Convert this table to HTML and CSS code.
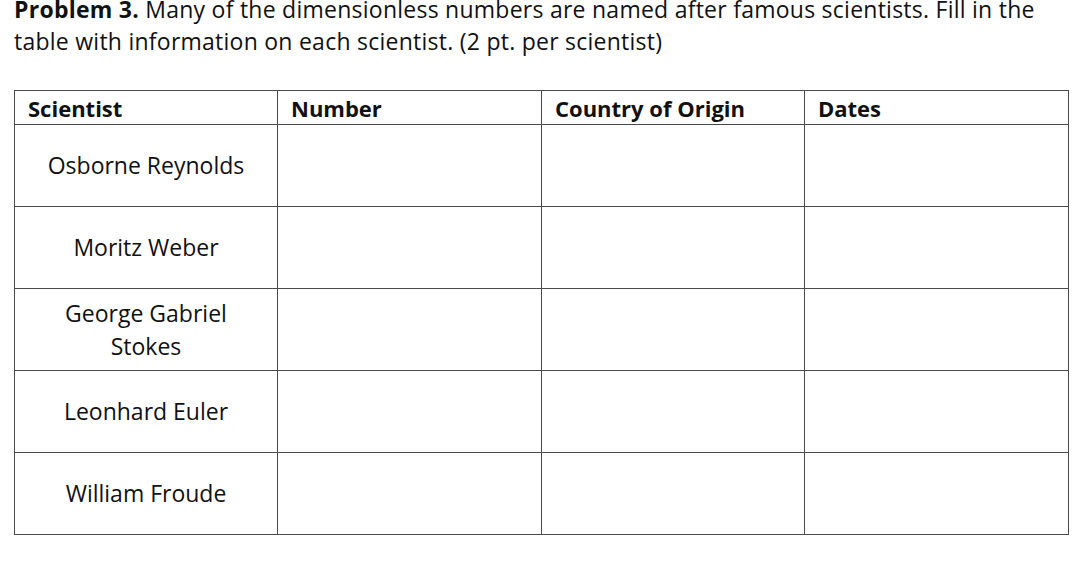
FILE: index.html
```html
<!DOCTYPE html>
<html>
<head>
<meta charset="utf-8">
<link rel="stylesheet" href="styles.css">
</head>
<body>
<div class="page">
  <p class="problem"><b>Problem 3.</b> Many of the dimensionless numbers are named after famous scientists. Fill in the table with information on each scientist. (2 pt. per scientist)</p>
  <table class="grid">
    <colgroup>
      <col class="c1"><col class="c2"><col class="c3"><col class="c4">
    </colgroup>
    <thead>
      <tr class="head"><th>Scientist</th><th>Number</th><th>Country of Origin</th><th>Dates</th></tr>
    </thead>
    <tbody>
      <tr class="row"><td class="name">Osborne Reynolds</td><td></td><td></td><td></td></tr>
      <tr class="row"><td class="name">Moritz Weber</td><td></td><td></td><td></td></tr>
      <tr class="row"><td class="name">George Gabriel<br>Stokes</td><td></td><td></td><td></td></tr>
      <tr class="row"><td class="name">Leonhard Euler</td><td></td><td></td><td></td></tr>
      <tr class="row"><td class="name">William Froude</td><td></td><td></td><td></td></tr>
    </tbody>
  </table>
</div>
</body>
</html>
```
FILE: styles.css
```css
html, body {
  margin: 0;
  padding: 0;
  background: #ffffff;
}
.page {
  padding: 0 14px;
  font-family: "Open Sans", Lato, sans-serif;
  color: #111111;
}
.problem {
  margin: -7px 0 0 0;
  font-size: 23px;
  line-height: 32px;
  letter-spacing: 0.25px;
  width: 1050px;
}
.problem b {
  font-weight: 700;
}
.grid {
  margin-top: 33px;
  border-collapse: collapse;
  table-layout: fixed;
  width: 1054px;
}
.c1 { width: 263px; }
.c2 { width: 264px; }
.c3 { width: 263px; }
.c4 { width: 264px; }
.grid th, .grid td {
  border: 1px solid #4a4a4a;
  padding: 0;
}
.grid th {
  height: 33px;
  text-align: left;
  padding-left: 13px;
  font-size: 22px;
  font-weight: 700;
}
.grid td {
  height: 81px;
}
.grid td.name {
  text-align: center;
  vertical-align: middle;
  font-size: 23px;
  line-height: 33px;
}
```
